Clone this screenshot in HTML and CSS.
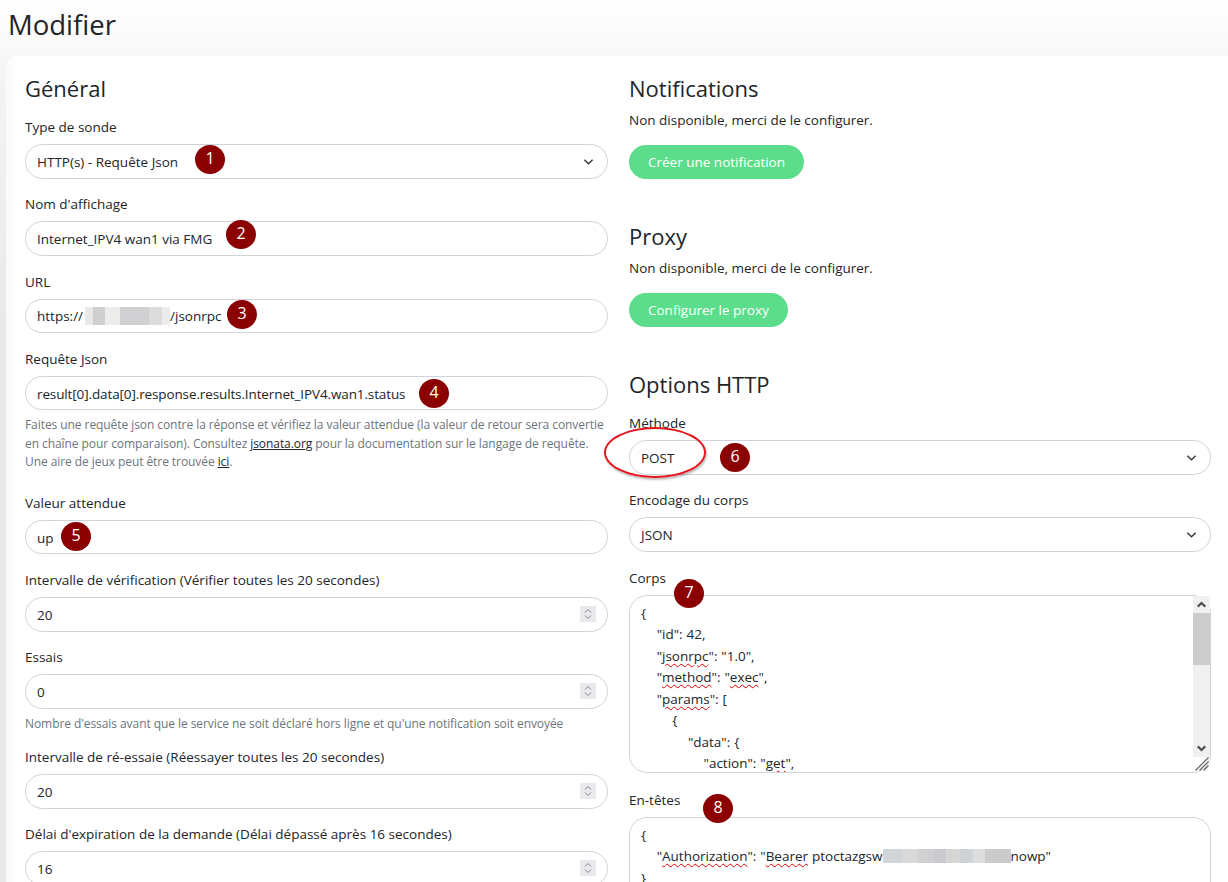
FILE: index.html
```html
<!DOCTYPE html>
<html lang="fr">
<head>
<meta charset="utf-8">
<title>Modifier</title>
<link rel="stylesheet" href="styles.css">
</head>
<body>
<h1 class="page-title">Modifier</h1>
<main class="card">
  <section class="col">
    <h2 class="section-title">Général</h2>
    <div class="group">
      <div class="label">Type de sonde</div>
      <div class="control select"><span>HTTP(s) - Requête Json</span><svg class="chev" viewBox="0 0 12 8"><path d="M1.5 1.5 6 6l4.5-4.5"/></svg><b class="pin pin1">1</b></div>
    </div>
    <div class="group">
      <div class="label">Nom d'affichage</div>
      <div class="control"><span>Internet_IPV4 wan1 via FMG</span><b class="pin pin2">2</b></div>
    </div>
    <div class="group">
      <div class="label">URL</div>
      <div class="control"><span>https://</span><i class="blur blur-url"></i><span>/jsonrpc</span><b class="pin pin3">3</b></div>
    </div>
    <div class="group group-help">
      <div class="label">Requête Json</div>
      <div class="control"><span class="tight">result[0].data[0].response.results.Internet_IPV4.wan1.status</span><b class="pin pin4">4</b></div>
      <p class="help">Faites une requête json contre la réponse et vérifiez la valeur attendue (la valeur de retour sera convertie en chaîne pour comparaison). Consultez <a href="#">jsonata.org</a> pour la documentation sur le langage de requête. Une aire de jeux peut être trouvée <a href="#">ici</a>.</p>
    </div>
    <div class="group">
      <div class="label">Valeur attendue</div>
      <div class="control"><span>up</span><b class="pin pin5">5</b></div>
    </div>
    <div class="group">
      <div class="label">Intervalle de vérification (Vérifier toutes les 20 secondes)</div>
      <div class="control"><span>20</span><span class="spin"><svg viewBox="0 0 16 16"><path d="M5 6.500l3-3 3 3M5 9.500l3 3 3-3"/></svg></span></div>
    </div>
    <div class="group">
      <div class="label">Essais</div>
      <div class="control"><span>0</span><span class="spin"><svg viewBox="0 0 16 16"><path d="M5 6.500l3-3 3 3M5 9.500l3 3 3-3"/></svg></span></div>
      <p class="help help-one">Nombre d'essais avant que le service ne soit déclaré hors ligne et qu'une notification soit envoyée</p>
    </div>
    <div class="group">
      <div class="label">Intervalle de ré-essaie (Réessayer toutes les 20 secondes)</div>
      <div class="control"><span>20</span><span class="spin"><svg viewBox="0 0 16 16"><path d="M5 6.500l3-3 3 3M5 9.500l3 3 3-3"/></svg></span></div>
    </div>
    <div class="group">
      <div class="label">Délai d'expiration de la demande (Délai dépassé après 16 secondes)</div>
      <div class="control"><span>16</span><span class="spin"><svg viewBox="0 0 16 16"><path d="M5 6.500l3-3 3 3M5 9.500l3 3 3-3"/></svg></span></div>
    </div>
  </section>
  <section class="col">
    <h2 class="section-title">Notifications</h2>
    <p class="note">Non disponible, merci de le configurer.</p>
    <button class="btn">Créer une notification</button>
    <h2 class="section-title section-next">Proxy</h2>
    <p class="note">Non disponible, merci de le configurer.</p>
    <button class="btn">Configurer le proxy</button>
    <h2 class="section-title section-http">Options HTTP</h2>
    <div class="group">
      <div class="label">Méthode</div>
      <div class="control select"><span>POST</span><svg class="chev" viewBox="0 0 12 8"><path d="M1.5 1.5 6 6l4.5-4.5"/></svg><i class="ring"></i><b class="pin pin6">6</b></div>
    </div>
    <div class="group">
      <div class="label">Encodage du corps</div>
      <div class="control select"><span>JSON</span><svg class="chev" viewBox="0 0 12 8"><path d="M1.5 1.5 6 6l4.5-4.5"/></svg></div>
    </div>
    <div class="group group-area">
      <div class="label">Corps</div>
      <div class="area area-body">
        <b class="pin pin7">7</b>
        <div class="code">{
    "id": 42,
    "<u>jsonrpc</u>": "1.0",
    "<u>method</u>": "<u>exec</u>",
    "<u>params</u>": [
        {
            "data": {
                "action": "<u>get</u>",</div>
        <div class="scrollbar">
          <svg class="sb-arrow" viewBox="0 0 16 16"><path d="M4.5 10 8 6.5l3.500 3.500"/></svg>
          <i class="sb-thumb"></i>
          <svg class="sb-arrow sb-down" viewBox="0 0 16 16"><path d="M4.500 6 8 9.500 11.500 6"/></svg>
        </div>
        <svg class="grip" viewBox="0 0 15 15"><path d="M14.500 1.500 1.500 14.500M14.500 5.500 5.500 14.500M14.500 9.500 9.500 14.500"/></svg>
      </div>
    </div>
    <div class="group">
      <div class="label">En-têtes</div>
      <div class="area area-head">
        <b class="pin pin8">8</b>
        <div class="code">{
    "<u>Authorization</u>": "<u>Bearer</u> ptoctazgsw<i class="blur blur-token"></i>nowp"
}</div>
      </div>
    </div>
  </section>
</main>
</body>
</html>
```
FILE: styles.css
```css
* { box-sizing: border-box; }
html, body { height: 100%; }
body {
  margin: 0;
  height: 882px;
  overflow: hidden;
  background: linear-gradient(#ffffff 0, #f5f5f5 60px, #e9e9e9 320px, #e9e9e9 100%);
  font-family: "Open Sans", "Noto Sans", sans-serif;
  font-size: 13.5px;
  color: #212529;
}
.page-title {
  margin: 0;
  padding: 6px 0 0 8px;
  height: 56px;
  font-size: 27.5px;
  font-weight: 400;
  line-height: 38px;
  background: linear-gradient(#fff 0, #f8f8f8 56px);
}
.card {
  margin-left: 6px;
  height: 900px;
  padding: 17px 17px 0 19px;
  background: linear-gradient(90deg, #fafafa 0, #fff 12px);
  border-radius: 10px 0 0 0;
  display: grid;
  grid-template-columns: 583px 582px;
  column-gap: 21px;
}
.section-title {
  margin: -1px 0 14px;
  font-size: 22px;
  font-weight: 400;
  line-height: 32px;
}
.group { margin-bottom: 16.75px; position: relative; }
.label {
  height: 19px;
  line-height: 19px;
  margin-bottom: 7px;
}
.control {
  position: relative;
  display: flex;
  align-items: center;
  height: 34.5px;
  padding: 1px 11px 0;
  border: 1px solid #ced4da;
  border-radius: 18px;
  background: #fff;
}
.tight { letter-spacing: -0.12px; }
.chev {
  position: absolute;
  right: 13px;
  top: 13px;
  width: 11px;
  height: 8px;
  fill: none;
  stroke: #343a40;
  stroke-width: 1.6;
}
.spin {
  position: absolute;
  right: 11px;
  top: 8px;
  width: 16px;
  height: 16px;
  background: #e9e9ed;
}
.spin svg {
  display: block;
  width: 16px;
  height: 16px;
  fill: none;
  stroke: #85858a;
  stroke-width: 1;
}
.blur { display: inline-block; }
.blur-url {
  width: 85px;
  height: 18px;
  margin-left: 2px;
  background: linear-gradient(90deg, #e8e8e8 0 10%, #cfcfd0 10% 24%, #ececea 24% 41%, #d0d0d2 41% 75%, #dcdcdc 75% 91%, #ececec 91%);
}
.blur-token {
  width: 128px;
  height: 14px;
  vertical-align: -2px;
  background: linear-gradient(90deg, #d1d5d9 0 16%, #dadada 16% 27%, #d1d1d4 27% 40%, #c9c9cf 40% 49%, #d6d6d4 49% 60%, #cfd2d5 60% 70%, #dedede 70% 80%, #cbcbcb 80% 100%);
}
.help {
  margin: 6px 0 0;
  font-size: 12px;
  line-height: 18.5px;
  color: #6c757d;
  letter-spacing: -0.07px;
}
.help a { color: #212529; }
.group-help { margin-bottom: 22px; }
.help-one { margin: 6px 0 -2px; }
.note {
  margin: 0 0 14.5px;
  line-height: 19px;
}
.btn {
  display: block;
  height: 34.5px;
  padding: 0 19px;
  border: 0;
  border-radius: 18px;
  background: #5cdd8b;
  color: #fff;
  font: inherit;
}
.section-title + .note { margin-top: -7px; }
.section-next { margin-top: 41px; }
.section-http { margin-top: 41px; }
.area {
  position: relative;
  border: 1px solid #ced4da;
  border-radius: 18px;
  background: #fff;
}
.area-body { height: 178px; }
.area-head { height: 90px; }
.group-area { margin-bottom: 18px; }
.code {
  height: 100%;
  overflow: hidden;
  padding: 7px 11px;
  white-space: pre;
  line-height: 21.5px;
  word-spacing: 0.4px;
}
.code u { text-decoration: underline wavy #e00000 1px; text-underline-offset: 2px; }
.scrollbar {
  position: absolute;
  right: 0;
  top: 0;
  width: 17px;
  height: 161px;
  background: #f0f0f0;
  display: flex;
  flex-direction: column;
}
.sb-arrow { width: 17px; height: 17px; flex: none; fill: none; stroke: #505050; stroke-width: 2; }
.sb-thumb { display: block; height: 52px; background: #cdcdcd; flex: none; }
.sb-down { margin-top: auto; }
.grip {
  position: absolute;
  right: 1px;
  bottom: 1px;
  width: 15px;
  height: 15px;
  fill: none;
  stroke: #666;
  stroke-width: 1.3;
}
.pin {
  position: absolute;
  z-index: 2;
  width: 30px;
  height: 29px;
  border-radius: 50%;
  background: #8b0000;
  color: #fff;
  font-weight: 400;
  font-size: 16px;
  line-height: 27px;
  text-align: center;
}
.pin1 { left: 169px; top: -0.5px; }
.pin2 { left: 200px; top: -2.5px; }
.pin3 { left: 201px; top: 0.5px; }
.pin4 { left: 393px; top: 2.5px; }
.pin5 { left: 35px; top: 1.5px; }
.pin6 { left: 90px; top: 1.5px; }
.pin7 { left: 44px; top: -16.5px; }
.pin8 { left: 73px; top: -23.5px; }
.ring {
  position: absolute;
  left: -26px;
  top: -14px;
  width: 102px;
  height: 51px;
  border: 2px solid #e8141c;
  border-radius: 50%;
  box-shadow: 1px 2px 2px rgba(0,0,0,.25);
  z-index: 1;
}
```
